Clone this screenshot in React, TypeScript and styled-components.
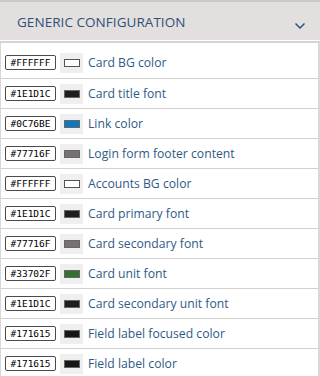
import React from "react";
import styled, { createGlobalStyle } from "styled-components";

const Global = createGlobalStyle`
  html, body { margin: 0; padding: 0; background: #ffffff; }
  body { width: 320px; height: 376px; overflow: hidden; font-family: "Open Sans", "Noto Sans", sans-serif; }
`;

const Panel = styled.div`
  width: 320px;
  display: flex;
  flex-direction: column;
`;

const Header = styled.div`
  height: 38px;
  background: #e2dfde;
  border-top: 2px solid #cbc9c8;
  border-bottom: 1px solid #ffffff;
  display: flex;
  align-items: center;
  justify-content: space-between;
  padding: 0 14px 0 17px;
`;

const Title = styled.span`
  font-size: 13.5px;
  color: #2d5279;
  letter-spacing: 0.05px;
  margin-top: 1px;
`;

const Chevron = styled.svg`
  width: 12px;
  height: 8px;
  margin-top: 10px;
`;

const List = styled.div`
  border-top: 2px solid #d6d4d3;
  border-left: 1px solid #d8d8d8;
  border-right: 2px solid #d8d8d8;
  padding-top: 1px;
  display: flex;
  flex-direction: column;
`;

const Row = styled.div`
  height: 29px;
  display: flex;
  align-items: center;
  gap: 4px;
  padding-left: 4px;
  border-bottom: 1px solid #d0d0d0;
  &:first-child { height: 31px; padding-top: 3px; }
`;

const Hex = styled.span`
  box-sizing: border-box;
  width: 51px;
  height: 15px;
  border: 1px solid #4a4a4a;
  border-radius: 2px;
  font-family: "DejaVu Sans Mono", "Liberation Mono", monospace;
  font-size: 9.5px;
  color: #000000;
  display: flex;
  align-items: center;
  justify-content: center;
`;

const SwatchCell = styled.span`
  width: 23px;
  height: 20px;
  background: #efefef;
  display: flex;
  align-items: center;
  justify-content: center;
`;

const Swatch = styled.span<{ $c: string }>`
  box-sizing: border-box;
  width: 16px;
  height: 8px;
  background: ${(p) => p.$c};
  border: 1px solid ${(p) => (p.$c === "#FFFFFF" ? "#555555" : "#666666")};
`;

const Label = styled.span`
  font-size: 12.2px;
  color: #2f5a86;
  margin-left: 1px;
`;

const rows: [string, string][] = [
  ["#FFFFFF", "Card BG color"],
  ["#1E1D1C", "Card title font"],
  ["#0C76BE", "Link color"],
  ["#77716F", "Login form footer content"],
  ["#FFFFFF", "Accounts BG color"],
  ["#1E1D1C", "Card primary font"],
  ["#77716F", "Card secondary font"],
  ["#33702F", "Card unit font"],
  ["#1E1D1C", "Card secondary unit font"],
  ["#171615", "Field label focused color"],
  ["#171615", "Field label color"],
];

export default function App() {
  return (
    <>
      <Global />
      <Panel>
        <Header>
          <Title>GENERIC CONFIGURATION</Title>
          <Chevron viewBox="0 0 12 8">
            <path d="M1.5 1.5 L6 6 L10.5 1.5" fill="none" stroke="#2d5279" strokeWidth="1.5" />
          </Chevron>
        </Header>
        <List>
          {rows.map(([c, l], i) => (
            <Row key={i}>
              <Hex>{c}</Hex>
              <SwatchCell>
                <Swatch $c={c} />
              </SwatchCell>
              <Label>{l}</Label>
            </Row>
          ))}
        </List>
      </Panel>
    </>
  );
}
